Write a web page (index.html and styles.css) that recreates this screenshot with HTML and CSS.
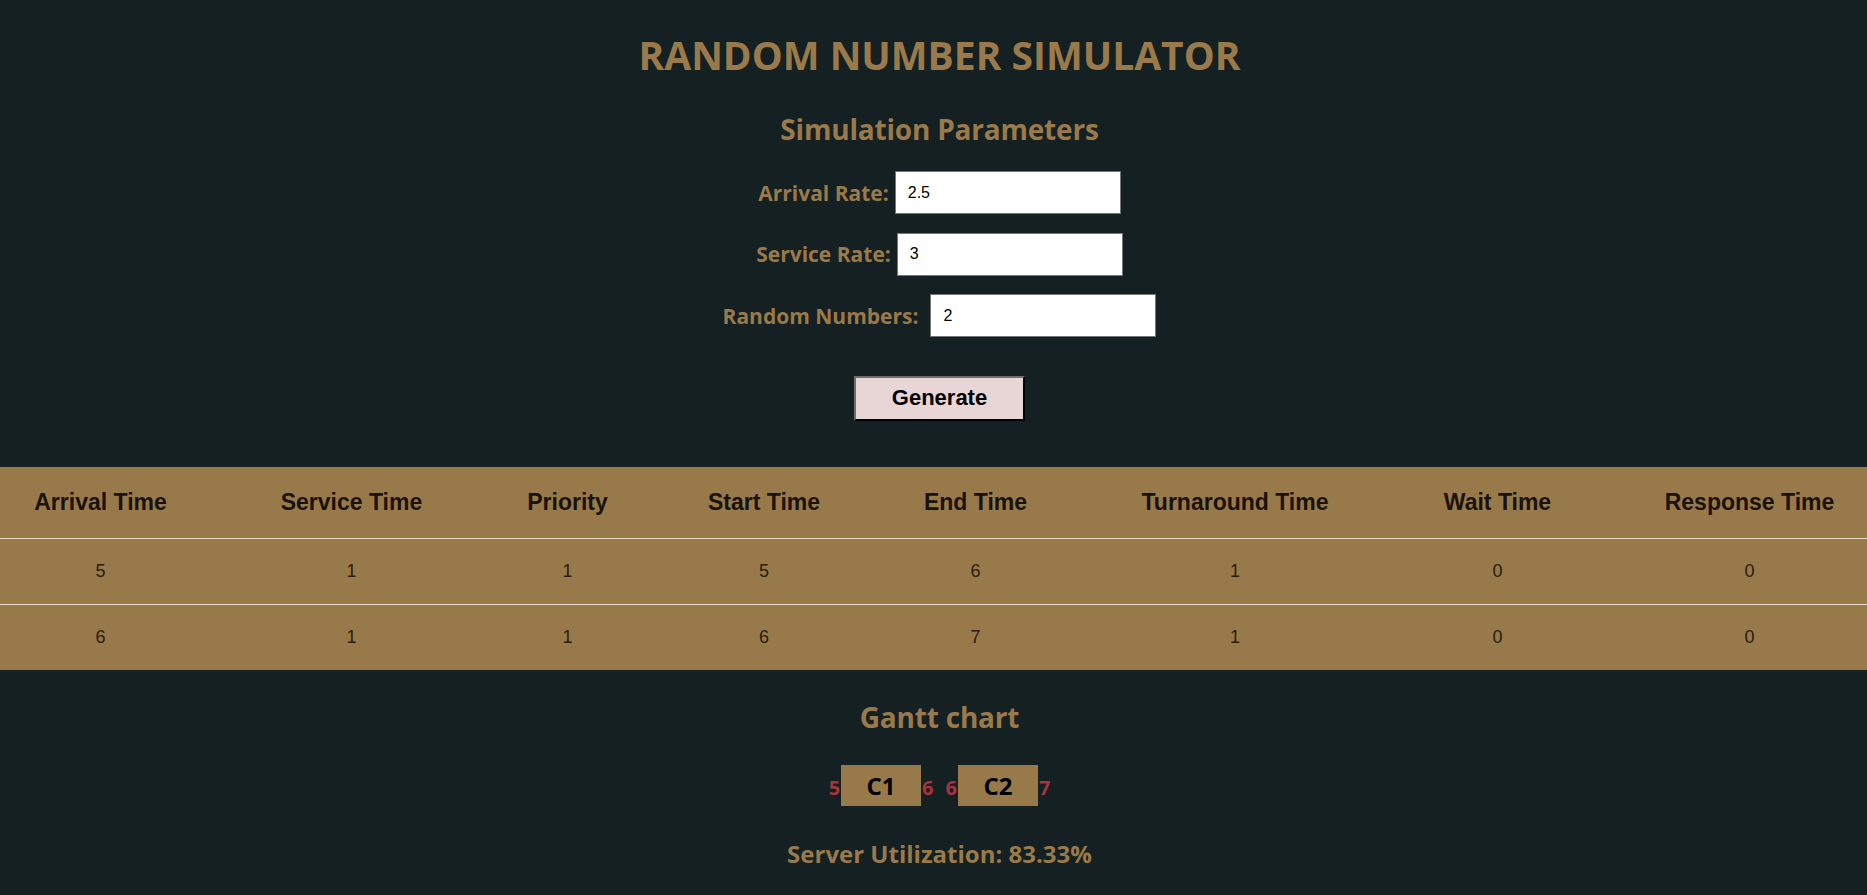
FILE: index.html
```html
<!DOCTYPE html>
<html lang="en">
<head>
<meta charset="utf-8">
<title>Random Number Simulator</title>
<link rel="stylesheet" href="styles.css">
</head>
<body>
<header class="top">
  <h1 class="title">RANDOM NUMBER SIMULATOR</h1>
  <h2 class="subtitle">Simulation Parameters</h2>
  <form class="params">
    <div class="field"><label class="label">Arrival Rate:</label><input class="input" type="text" value="2.5"></div>
    <div class="field"><label class="label">Service Rate:</label><input class="input" type="text" value="3"></div>
    <div class="field field-wide"><label class="label">Random Numbers:</label><input class="input" type="text" value="2"></div>
    <button class="btn" type="button">Generate</button>
  </form>
</header>
<div class="table-wrap">
<table class="results">
  <colgroup>
    <col class="c-arrival"><col class="c-service"><col class="c-priority"><col class="c-start">
    <col class="c-end"><col class="c-turn"><col class="c-wait"><col class="c-resp">
  </colgroup>
  <thead>
    <tr><th>Arrival Time</th><th>Service Time</th><th>Priority</th><th>Start Time</th><th>End Time</th><th>Turnaround Time</th><th>Wait Time</th><th>Response Time</th></tr>
  </thead>
  <tbody>
    <tr><td>5</td><td>1</td><td>1</td><td>5</td><td>6</td><td>1</td><td>0</td><td>0</td></tr>
    <tr><td>6</td><td>1</td><td>1</td><td>6</td><td>7</td><td>1</td><td>0</td><td>0</td></tr>
  </tbody>
</table>
</div>
<section class="gantt">
  <h2 class="subtitle gantt-title">Gantt chart</h2>
  <div class="gantt-row">
    <div class="gantt-item"><span class="tick">5</span><span class="bar">C1</span><span class="tick">6</span></div>
    <div class="gantt-item"><span class="tick">6</span><span class="bar">C2</span><span class="tick">7</span></div>
  </div>
  <h3 class="util">Server Utilization: 83.33%</h3>
</section>
</body>
</html>
```
FILE: styles.css
```css
html, body {
  margin: 0;
  padding: 0;
  background: #142022;
}
body {
  font-family: "Open Sans", "Noto Sans", sans-serif;
  color: #9a7a4a;
  min-height: 895px;
  overflow-x: hidden;
}
.top {
  padding-left: 12px;
  text-align: center;
}
.title {
  margin: 32px 0 0;
  font-size: 39px;
  line-height: 46px;
  font-weight: 700;
}
.subtitle {
  margin: 34px 0 0;
  font-size: 28px;
  line-height: 34px;
  font-weight: 700;
  letter-spacing: -0.2px;
}
.params {
  margin-top: 25px;
  display: flex;
  flex-direction: column;
  align-items: center;
  gap: 18.5px;
}
.field {
  display: flex;
  align-items: center;
  justify-content: center;
  gap: 6px;
}
.field-wide {
  gap: 12px;
}
.label {
  font-size: 21px;
  font-weight: 700;
}
.input {
  box-sizing: border-box;
  width: 226px;
  height: 43px;
  padding: 0 12px;
  border: 1px solid #767676;
  background: #fff;
  font-family: "Liberation Sans", Arial, sans-serif;
  font-size: 16px;
  color: #000;
  outline: none;
}
.btn {
  box-sizing: border-box;
  margin-top: 20px;
  width: 171px;
  height: 45px;
  background: #e8d5d6;
  border-style: solid;
  border-width: 2px;
  border-color: #6e6e6e #000 #000 #6e6e6e;
  font-family: "Liberation Sans", Arial, sans-serif;
  font-size: 22px;
  font-weight: 700;
  color: #000;
  padding: 0;
}
.table-wrap {
  margin-top: 46px;
  overflow: hidden;
}
.results {
  margin-left: -22px;
  width: 1918px;
  table-layout: fixed;
  border-collapse: collapse;
  background: #98794a;
  font-family: "Liberation Sans", Arial, sans-serif;
}
.c-arrival { width: 245px; }
.c-service { width: 257px; }
.c-priority { width: 175px; }
.c-start { width: 218px; }
.c-end { width: 205px; }
.c-turn { width: 314px; }
.c-wait { width: 211px; }
.c-resp { width: 293px; }
.results th {
  height: 71px;
  padding: 0;
  font-size: 23px;
  font-weight: 700;
  color: #1a1208;
  text-align: center;
  white-space: nowrap;
}
.results td {
  height: 65px;
  padding: 0;
  font-size: 18px;
  color: #2a1c0c;
  text-align: center;
  border-top: 1px solid #e6dccb;
}
.gantt {
  padding-left: 12px;
  text-align: center;
}
.gantt-title {
  margin-top: 30px;
}
.gantt-row {
  margin-top: 31px;
  display: flex;
  justify-content: center;
  gap: 12px;
}
.gantt-item {
  display: flex;
  align-items: baseline;
  gap: 1px;
}
.tick {
  font-size: 20px;
  font-weight: 700;
  color: #a9333b;
}
.bar {
  display: inline-block;
  width: 80px;
  height: 41px;
  line-height: 41px;
  background: #98794a;
  color: #000;
  font-size: 24px;
  font-weight: 700;
}
.util {
  margin: 33px 0 0;
  font-size: 24px;
  line-height: 30px;
  font-weight: 700;
}
```
